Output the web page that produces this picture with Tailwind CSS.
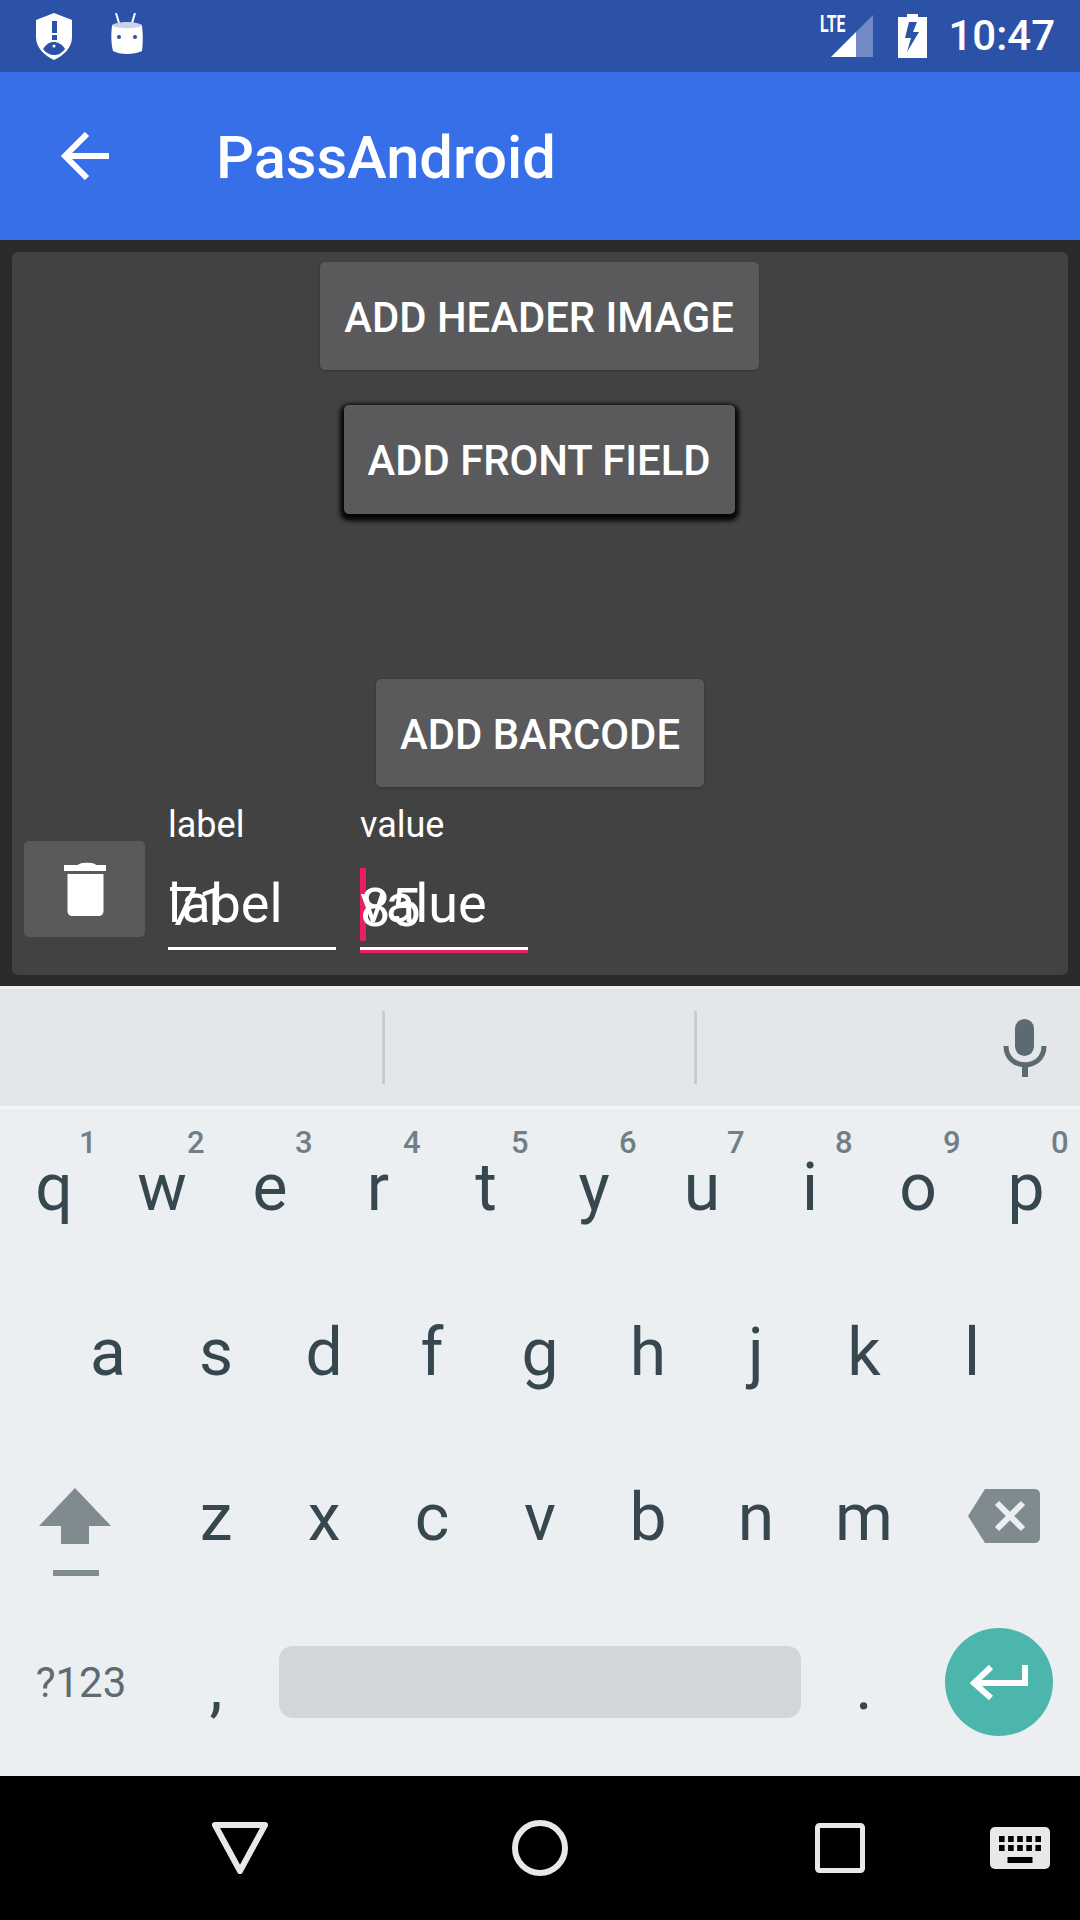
<!DOCTYPE html>
<html lang="en">
<head>
    <meta charset="UTF-8">
    <meta name="viewport" content="width=device-width, initial-scale=1.0">
    <title>PassAndroid</title>
    <script src="https://cdn.jsdelivr.net/npm/@tailwindcss/browser@4"></script>
</head>
<body class="bg-black">
    <div class="w-[1080px] h-[1920px] flex flex-col overflow-hidden font-['Roboto',sans-serif]">
        <!-- Status bar -->
        <div class="h-[72px] shrink-0 bg-[#2c52a8] flex items-center text-white relative">
            <svg class="ml-[35px] w-[38px] h-[47px] mb-[-1px]" viewBox="0 0 38 47">
                <path fill="#fff" d="M19 0 L37 7 V24 C37 35 28 43 19 47 C10 43 1 35 1 24 V7 Z"/>
                <rect x="17" y="8" width="5" height="12" fill="#2c52a8"/>
                <rect x="17" y="22" width="5" height="5" fill="#2c52a8"/>
                <path fill="#2c52a8" d="M8 36 C12 30 15 29 19 29 C23 29 27 31 30 36 C26 41 23 42 19 42 C15 42 11 40 8 36 Z"/>
                <circle cx="19" cy="33" r="1.5" fill="#fff"/>
            </svg>
            <svg class="ml-[37px] w-[34px] h-[42px] mb-[4px]" viewBox="0 0 34 42">
                <path stroke="#fff" stroke-width="2" d="M6 0 L9 10 M25 0 L22 10"/>
                <path fill="#c9d3ea" d="M2 12 C8 8 26 8 32 12 L32 16 H2 Z"/>
                <path fill="#fff" d="M2 13 C10 16 24 16 32 13 C33 20 33 30 32 38 C24 42 10 42 3 38 C1 30 1 20 2 13 Z"/>
                <circle cx="9" cy="24" r="2" fill="#2c52a8"/>
                <circle cx="25" cy="24" r="2" fill="#2c52a8"/>
            </svg>
            <div class="ml-auto relative w-[53px] h-[42px] mr-[25px]">
                <span class="absolute left-0 top-[-3px] text-[24px] leading-[24px] font-bold scale-x-[0.66] origin-left">LTE</span>
                <svg class="absolute left-[11px] top-0 w-[42px] h-[42px]" viewBox="0 0 42 42">
                    <path fill="#7189c7" d="M42 0 V42 H25 V17 Z"/>
                    <path fill="#fff" d="M25 17 V42 H0 Z"/>
                </svg>
            </div>
            <svg class="w-[29px] h-[44px] mr-[21px]" viewBox="0 0 29 44">
                <path fill="#fff" d="M9 0 H20 V3 H29 V44 H0 V3 H9 Z"/>
                <path fill="#2c52a8" d="M19 8 H11 L7 24 H13 L9 38 L21 18 H15 Z"/>
            </svg>
            <span class="text-[42px] leading-none font-medium mr-[25px]">10:47</span>
        </div>

        <!-- App bar -->
        <div class="h-[168px] shrink-0 bg-[#376fe8] flex items-center text-white">
            <svg class="ml-[60px] w-[49px] h-[48px]" viewBox="0 0 49 48">
                <path fill="none" stroke="#fff" stroke-width="6" d="M27 2 L5 24 L27 46 M5 24 H49"/>
            </svg>
            <h1 class="ml-[107px] mt-[6px] text-[59.6px] leading-none font-medium">PassAndroid</h1>
        </div>

        <!-- Content -->
        <div class="h-[746px] shrink-0 bg-[#2b2b2b] px-3 pt-3">
            <div class="h-[723px] bg-[#424242] rounded-md flex flex-col items-center">
                <button class="mt-[10px] mr-[2px] pt-[4px] w-[439px] h-[108px] bg-[#5a5a5c] rounded-[5px] text-white text-[41.8px] font-medium shadow-[0_1px_3px_rgba(0,0,0,.25)]">ADD HEADER IMAGE</button>
                <button class="mt-[35px] mr-[2px] pt-[4px] w-[391px] h-[109px] bg-[#5a5a5c] rounded-[5px] text-white text-[41.8px] font-medium shadow-[0_3px_4px_4px_rgba(0,0,0,.9)]">ADD FRONT FIELD</button>
                <button class="mt-[165px] pt-[4px] w-[328px] h-[108px] bg-[#5a5a5c] rounded-[5px] text-white text-[41.8px] font-medium shadow-[0_1px_3px_rgba(0,0,0,.25)]">ADD BARCODE</button>
                <div class="self-start flex items-start ml-[12px] mt-[18px]">
                    <div class="mt-[36px] w-[121px] h-[96px] bg-[#5a5a5c] rounded-[5px] flex items-center justify-center">
                        <svg class="w-[42px] h-[54px]" viewBox="0 0 42 54">
                            <path fill="#fff" d="M0 3 H14 C15 0 31 0 32 3 H42 V9 H0 Z" />
                            <path fill="#fff" d="M3.5 12 H39.5 V49 C39.5 52 37.5 54 34.5 54 H8.5 C5.5 54 3.5 52 3.5 49 Z"/>
                        </svg>
                    </div>
                    <div class="ml-[23px] w-[168px]">
                        <div class="text-[36px] leading-[40px] text-white">label</div>
                        <div class="relative h-[105px] border-b-[3px] border-white">
                            <span class="absolute left-0 top-[34px] text-[54px] leading-[56px] text-white">71</span>
                            <span class="absolute left-0 top-[31px] text-[54px] leading-[56px] text-white">label</span>
                        </div>
                    </div>
                    <div class="ml-[24px] w-[168px]">
                        <div class="text-[36px] leading-[40px] text-white">value</div>
                        <div class="relative h-[105px] border-b-[3px] border-white">
                            <span class="absolute left-0 top-[23px] w-[6px] h-[73px] bg-[#e91e63]"></span>
                            <span class="absolute left-0 top-[35px] text-[54px] leading-[56px] text-white">85</span>
                            <span class="absolute left-0 top-[31px] text-[54px] leading-[56px] text-white">value</span>
                            <span class="absolute left-0 right-0 bottom-[-6px] h-[3px] bg-[#e91e63]"></span>
                        </div>
                    </div>
                </div>
            </div>
        </div>

        <!-- Suggestion strip -->
        <div class="h-[3px] shrink-0 bg-[#edf0f3]"></div>
        <div class="h-[117px] shrink-0 bg-[#e3e7ea] flex items-center relative">
            <div class="ml-[382px] w-[3px] h-[73px] bg-[#c8ccce]"></div>
            <div class="ml-[309px] w-[3px] h-[73px] bg-[#c8ccce]"></div>
            <svg class="ml-[306px] w-[44px] h-[58px]" viewBox="0 0 44 58">
                <rect x="12" y="0" width="19" height="37" rx="9.5" fill="#5c6b72"/>
                <path fill="none" stroke="#5c6b72" stroke-width="5" d="M3 27 C3 52 41 52 41 27"/>
                <rect x="19" y="44" width="6" height="14" fill="#5c6b72"/>
            </svg>
        </div>

        <!-- Keyboard -->
        <div class="h-[670px] shrink-0 bg-[#ebeff2] border-t-[3px] border-[#f3f5f7] text-[#37474f]">
            <div class="h-[158px] mb-[3px] flex text-[66px] leading-none">
                <div class="relative w-[108px] flex items-center justify-center">q<span class="absolute left-[79px] top-[18px] text-[31px] font-medium text-[#717f85]">1</span></div>
                <div class="relative w-[108px] flex items-center justify-center">w<span class="absolute left-[79px] top-[18px] text-[31px] font-medium text-[#717f85]">2</span></div>
                <div class="relative w-[108px] flex items-center justify-center">e<span class="absolute left-[79px] top-[18px] text-[31px] font-medium text-[#717f85]">3</span></div>
                <div class="relative w-[108px] flex items-center justify-center">r<span class="absolute left-[79px] top-[18px] text-[31px] font-medium text-[#717f85]">4</span></div>
                <div class="relative w-[108px] flex items-center justify-center">t<span class="absolute left-[79px] top-[18px] text-[31px] font-medium text-[#717f85]">5</span></div>
                <div class="relative w-[108px] flex items-center justify-center">y<span class="absolute left-[79px] top-[18px] text-[31px] font-medium text-[#717f85]">6</span></div>
                <div class="relative w-[108px] flex items-center justify-center">u<span class="absolute left-[79px] top-[18px] text-[31px] font-medium text-[#717f85]">7</span></div>
                <div class="relative w-[108px] flex items-center justify-center">i<span class="absolute left-[79px] top-[18px] text-[31px] font-medium text-[#717f85]">8</span></div>
                <div class="relative w-[108px] flex items-center justify-center">o<span class="absolute left-[79px] top-[18px] text-[31px] font-medium text-[#717f85]">9</span></div>
                <div class="relative w-[108px] flex items-center justify-center">p<span class="absolute left-[79px] top-[18px] text-[31px] font-medium text-[#717f85]">0</span></div>
            </div>
            <div class="h-[165px] flex pl-[54px] text-[66px] leading-none">
                <div class="w-[108px] flex items-center justify-center">a</div>
                <div class="w-[108px] flex items-center justify-center">s</div>
                <div class="w-[108px] flex items-center justify-center">d</div>
                <div class="w-[108px] flex items-center justify-center">f</div>
                <div class="w-[108px] flex items-center justify-center">g</div>
                <div class="w-[108px] flex items-center justify-center">h</div>
                <div class="w-[108px] flex items-center justify-center">j</div>
                <div class="w-[108px] flex items-center justify-center">k</div>
                <div class="w-[108px] flex items-center justify-center">l</div>
            </div>
            <div class="h-[165px] flex text-[66px] leading-none">
                <div class="w-[162px] flex items-center justify-center pr-[12px]">
                    <svg class="w-[72px] h-[88px] mt-[29px]" viewBox="0 0 72 88">
                        <path fill="#7f8b8e" d="M36 0 L72 38 H50 V56 H22 V38 H0 Z"/>
                        <rect x="14" y="82" width="46" height="6" fill="#7f8b8e"/>
                    </svg>
                </div>
                <div class="w-[108px] flex items-center justify-center">z</div>
                <div class="w-[108px] flex items-center justify-center">x</div>
                <div class="w-[108px] flex items-center justify-center">c</div>
                <div class="w-[108px] flex items-center justify-center">v</div>
                <div class="w-[108px] flex items-center justify-center">b</div>
                <div class="w-[108px] flex items-center justify-center">n</div>
                <div class="w-[108px] flex items-center justify-center">m</div>
                <div class="w-[162px] flex items-center justify-center pl-[10px]">
                    <svg class="w-[72px] h-[54px] mt-[-3px]" viewBox="0 0 72 54">
                        <path fill="#7f8b8e" d="M17 0 H66 C70 0 72 2 72 6 V48 C72 52 70 54 66 54 H17 L0 27 Z"/>
                        <path fill="none" stroke="#ebeff2" stroke-width="6" d="M29 14 L55 40 M55 14 L29 40"/>
                    </svg>
                </div>
            </div>
            <div class="h-[165px] flex items-center relative">
                <div class="w-[162px] text-center text-[42px] leading-none text-[#5e6c72]">?123</div>
                <div class="w-[108px] text-center text-[66px] leading-none mt-[8px]">,</div>
                <div class="ml-[9px] w-[522px] h-[72px] rounded-[14px] bg-[#d1d6d9] mt-[-2px]"></div>
                <div class="ml-[9px] w-[108px] text-center text-[66px] leading-none mt-[8px]">.</div>
                <div class="ml-[27px] w-[108px] h-[108px] rounded-full bg-[#4db6ac] flex items-center justify-center mt-[-1px]">
                    <svg class="w-[58px] h-[36px]" viewBox="0 0 58 36">
                        <path fill="none" stroke="#fff" stroke-width="6" d="M21 3 L4 19 L21 34 M4 19 H55 V1"/>
                    </svg>
                </div>
            </div>
        </div>

        <!-- Navigation bar -->
        <div class="h-[144px] shrink-0 bg-black relative flex items-center">
            <svg class="ml-[212px] w-[56px] h-[52px]" viewBox="0 0 56 52">
                <path fill="none" stroke="#e8e8e8" stroke-width="6" stroke-linejoin="round" d="M3 3 H53 L28 49 Z"/>
            </svg>
            <svg class="ml-[244px] w-[56px] h-[56px]" viewBox="0 0 56 56">
                <circle cx="28" cy="28" r="25" fill="none" stroke="#e8e8e8" stroke-width="6"/>
            </svg>
            <svg class="ml-[247px] w-[50px] h-[50px]" viewBox="0 0 50 50">
                <rect x="2.5" y="2.5" width="45" height="45" rx="2" fill="none" stroke="#e8e8e8" stroke-width="5"/>
            </svg>
            <svg class="ml-[125px] w-[60px] h-[42px]" viewBox="0 0 60 42">
                <rect width="60" height="42" rx="5" fill="#e8e8e8"/>
                <path stroke="#000" stroke-width="6" stroke-dasharray="5.6 3.5" d="M9 12 H51 M9 21 H51"/>
                <rect x="17.5" y="30" width="25" height="6" fill="#000"/>
            </svg>
        </div>
    </div>
</body>
</html>
